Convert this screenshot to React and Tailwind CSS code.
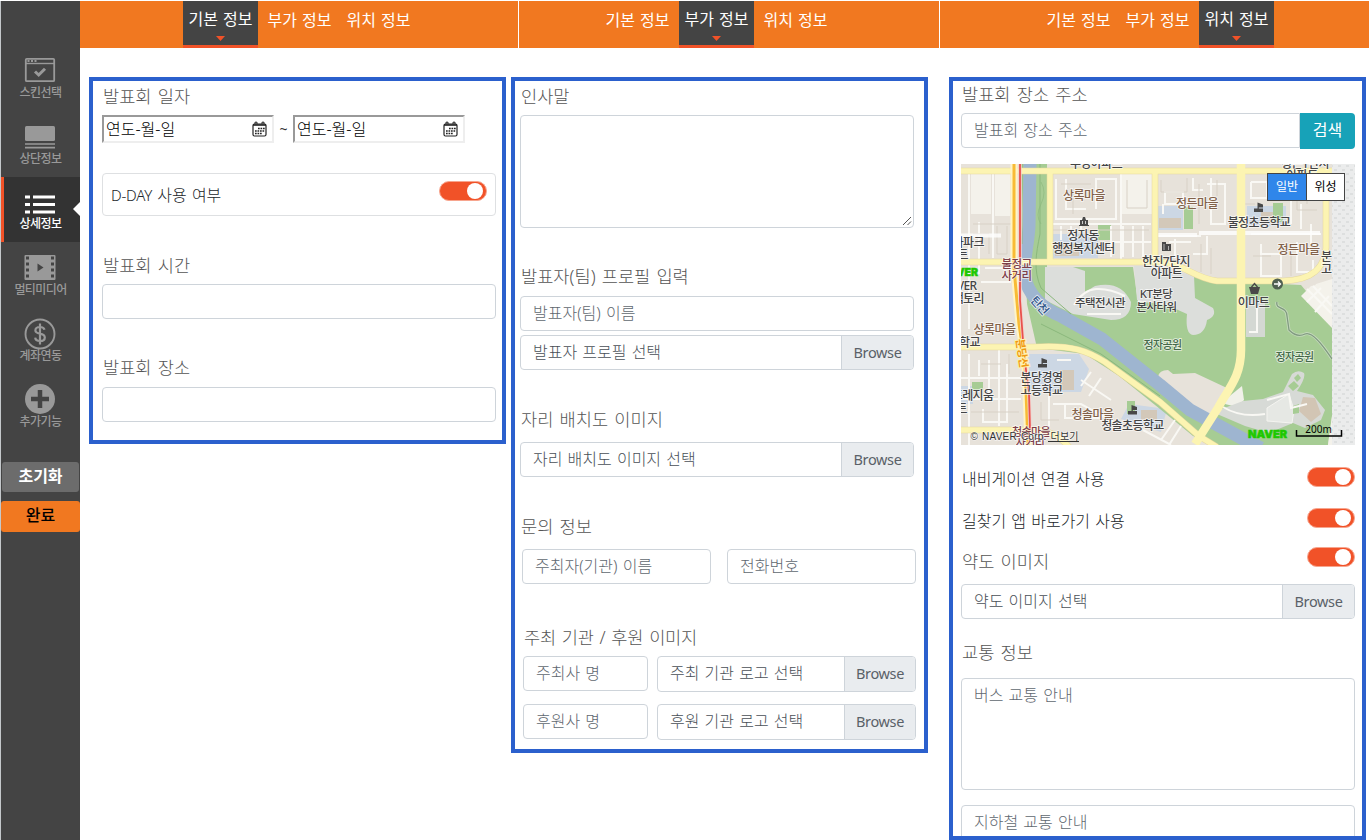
import React from "react";

const Label = ({ children, className = "" }) => (
  <div className={`h-6 shrink-0 pl-px text-[17.6px] font-light leading-[22px] whitespace-nowrap text-[#555] [word-spacing:1.6px] ${className}`}>
    {children}
  </div>
);

const Field = ({ children, className = "" }) => (
  <div
    className={`h-[35px] shrink-0 rounded border border-[#ced4da] bg-white px-3 text-base font-light leading-8 whitespace-nowrap text-[#5f6870] ${className}`}
  >
    {children}
  </div>
);

const FileField = ({ children, className = "h-[35px] w-[394px]", browse = "w-[72px]" }) => (
  <div className={`flex shrink-0 overflow-hidden rounded border border-[#ced4da] bg-white text-base whitespace-nowrap text-[#495057] ${className}`}>
    <div className="min-w-0 flex-1 px-3 font-light leading-8">{children}</div>
    <div className={`shrink-0 border-l border-[#ced4da] bg-[#e9ecef] text-center font-['Noto_Sans'] text-[14.5px] leading-[33px] tracking-[-0.35px] text-[#5a6168] ${browse}`}>
      Browse
    </div>
  </div>
);

const Toggle = ({ className = "" }) => (
  <div className={`flex h-5 w-12 shrink-0 items-center justify-end rounded-full border border-[#f7a58e] bg-[#f15228] pr-[3px] ${className}`}>
    <div className="size-4 rounded-full bg-white" />
  </div>
);

const TABS = ["기본 정보", "부가 정보", "위치 정보"];

const TabBar = ({ active, className }) => (
  <div className={`flex h-[47px] shrink-0 gap-1 bg-[#f17820] [word-spacing:0.8px] ${className}`}>
    {TABS.map((tab, i) =>
      i === active ? (
        <div key={tab} className="flex w-[75px] flex-col items-center border-b-[3px] border-[#f15228] bg-[#444] text-base leading-5 whitespace-nowrap text-white">
          <div className="mt-2 h-5">{tab}</div>
          <svg className="mt-[7px]" width="9" height="5" viewBox="0 0 9 5">
            <path d="M0 0H9L4.500 5Z" fill="#f15228" />
          </svg>
        </div>
      ) : (
        <div key={tab} className="w-[75px] pt-[9px] text-center text-base leading-5 whitespace-nowrap text-white">
          {tab}
        </div>
      )
    )}
  </div>
);

const DateField = () => (
  <div className="flex h-7 w-[172px] items-center justify-between border-2 border-t-[#999] border-r-[#eee] border-b-[#eee] border-l-[#999] pr-[5px] pl-[2px] text-base leading-6 font-light text-black">
    <span>연도-월-일</span>
    <svg width="15" height="16" viewBox="0 0 15 16" fill="none" stroke="#222">
      <rect x="1" y="3" width="13" height="12" rx="1.500" strokeWidth="1.200" />
      <path d="M1 4H14" strokeWidth="1.600" />
      <path d="M3 3V1.200H5V3M10 3V1.200H12V3" strokeWidth="1" />
      <path d="M6 7.500H13M3 10H13M3 12.500H10" strokeWidth="1.600" strokeDasharray="1.700 .8" />
    </svg>
  </div>
);

const MENU = [
  {
    name: "스킨선택",
    icon: (
      <>
        <rect x="1.800" y="3.800" width="28.400" height="22.400" rx="1" fill="none" stroke="currentColor" strokeWidth="1.800" />
        <path d="M2 8.500H30" stroke="currentColor" strokeWidth="1.400" />
        <path d="M3.500 6H5.500M7 6H9M10.500 6H12.500" stroke="currentColor" strokeWidth="1.800" />
        <path d="M11 16.500L14.700 20L21 13.800" fill="none" stroke="currentColor" strokeWidth="3" />
      </>
    ),
  },
  {
    name: "상단정보",
    icon: (
      <>
        <rect x="1" y="5" width="30" height="15" rx="1.500" fill="currentColor" />
        <path d="M1 23H31M1 26.700H31" stroke="currentColor" strokeWidth="1.700" />
      </>
    ),
  },
  {
    name: "상세정보",
    active: true,
    icon: <path d="M1 10H6M9 10H31M1 17.500H6M9 17.500H31M1 25H6M9 25H31" stroke="currentColor" strokeWidth="3" />,
  },
  {
    name: "멀티미디어",
    icon: (
      <>
        <rect x="0.500" y="3" width="31" height="25" rx="1" fill="currentColor" />
        <path d="M3.500 4.500V27M28.500 4.500V27" stroke="#444" strokeWidth="3" strokeDasharray="3 3" />
        <path d="M13.500 11.500L19.500 15.500L13.500 19.500Z" fill="#444" />
      </>
    ),
  },
  {
    name: "계좌연동",
    icon: (
      <>
        <circle cx="16" cy="16" r="14.500" fill="none" stroke="currentColor" strokeWidth="1.900" />
        <path d="M20.500 11.800C20 9.800 18.400 9 16 9C13.200 9 11.400 10.400 11.400 12.500C11.400 17 20.800 14.300 20.800 19.400C20.800 21.700 18.800 23 16 23C13.200 23 11.400 21.800 11.200 19.700M16 5.500V26.500" fill="none" stroke="currentColor" strokeWidth="2.200" />
      </>
    ),
  },
  {
    name: "추가기능",
    icon: (
      <>
        <circle cx="16" cy="15" r="15" fill="currentColor" />
        <path d="M16 6V24M7 15H25" stroke="#444" strokeWidth="4.500" />
      </>
    ),
  },
];

const Sidebar = () => (
  <aside className="mt-px flex w-20 shrink-0 flex-col border-l border-[#c4c8cb] bg-[#444] pt-[44px] text-[#999]">
    {MENU.map(({ name, icon, active }) => (
      <div
        key={name}
        className={`relative flex shrink-0 flex-col items-center pt-[10px] ${active ? "h-[65px] bg-[#333] text-white" : "h-[66px]"}`}
      >
        {active && <div className="absolute top-0 left-0 h-full w-[3px] bg-[#f15228]" />}
        <svg className="mr-[2px]" width="32" height="32" viewBox="0 0 32 32">{icon}</svg>
        <div className={`text-[12px] leading-3 font-medium tracking-[-0.6px] whitespace-nowrap ${active ? "-mt-[1px]" : ""}`}>{name}</div>
        {active && (
          <svg className="absolute top-[25px] right-0" width="7" height="14" viewBox="0 0 7 14">
            <path d="M7 0V14L0 7Z" fill="#fff" />
          </svg>
        )}
      </div>
    ))}
    <div className="mr-px ml-px mt-[22px] h-[30px] shrink-0 rounded-[3px] bg-[#6c6c6c] text-center text-base leading-[29px] font-bold text-white">초기화</div>
    <div className="mt-[9px] h-[31px] shrink-0 rounded-[3px] bg-[#f17820] text-center text-base leading-7 font-medium text-black">완료</div>
  </aside>
);

const ROAD = "#fcf4b2";
const GREEN = "#a6cc94";

const MapText = ({ x, y, children, fill = "#444", anchor = "middle", size = 12 }) => (
  <text
    x={x}
    y={y + size * 0.4}
    fill={fill}
    textAnchor={anchor}
    fontSize={size}
    fontWeight="500"
    letterSpacing="-0.6"
    stroke="#fff"
    strokeOpacity=".7"
    strokeWidth="1.600"
    paintOrder="stroke"
  >
    {children}
  </text>
);

const Flag = ({ x, y }) => (
  <path transform={`translate(${x} ${y})`} d="M0 9.500V6H3.500V0L9 2V5H4.800V6H9V9.500Z" fill="#484848" />
);

const BROWN = "#82624a";
const WINE = "#7d3f4a";

const MapView = () => (
  <div className="relative h-[281px] w-[394px] shrink-0 overflow-hidden">
    <svg width="394" height="281" viewBox="0 0 394 281">
      <defs>
        <pattern id="dots" width="8" height="8" patternUnits="userSpaceOnUse">
          <rect width="8" height="8" fill="#ebecec" />
          <path d="M1 2H4M5 6H8" stroke="#d9dbdb" strokeWidth="1.500" />
        </pattern>
        <clipPath id="land">
          <rect width="371" height="281" />
        </clipPath>
      </defs>
      <rect width="394" height="281" fill="url(#dots)" />
      <g clipPath="url(#land)">
        <rect width="371" height="281" fill="#e7e2da" />

        <g fill="#f4f2eb">
          <path d="M34 10H49V52H34ZM10 10H30V50H10ZM160 10H191V50H160ZM175 110H185V140H175ZM258 120H275V136H262ZM355 120L371 115V160L345 135Z" />
        </g>
        <g fill="#ccd7e4">
          <path d="M92 70H137V94H92ZM65 190L118 190L128 205L120 228H70ZM196 42H222V66H196ZM286 42H325V62H286ZM168 240L206 245L200 268L160 255ZM205 118L230 125L232 140L205 140ZM0 222H12V240H0Z" />
        </g>
        <path d="M94 80H118V92H94ZM99 206H113V226H99ZM198 54H220V64H198ZM300 48H316V60H300ZM180 246H196V256H180Z" fill="#d3c8b9" />

        <path
          d="M60 0H86V103H172L177 138L226 140L232 111L276 118L340 121L360 145L371 155V252L367 281H255L232 272L199 245L158 212L124 190L76 184L66 140Z"
          fill={GREEN}
        />
        <path d="M137 61H150V76H137ZM223 43H232V65H223ZM312 39H322V58H312ZM11 218H22V226H11ZM166 237H174V250H166Z" fill={GREEN} />
        <path d="M84 103H112L124 107V128L134 122Q160 116 170 138Q170 156 150 156L112 150L84 136Z" fill="#dcdedb" />
        <path d="M173 102L196 102L233 112L234 134L252 144Q256 152 246 156Q244 171 232 171Q224 170 226 150L208 142L176 136Z" fill="#dcdedb" />
        <path d="M285 136H304V173H285Z" fill="#d4d8d3" />
        <path d="M350 122L371 118V164L340 132Z" fill="#f4f2eb" />
        <path d="M197 213Q198 206 207 206L212 210L234 209L266 224L266 238L247 256L218 234L216 229L207 226Z" fill="#e7e2da" />
        <path d="M265 235L281 222L283 236L276 243L264 240Z" fill="#f1f1e9" />
        <path
          d="M258 246L282 237L302 235L322 228L331 210Q337 205 343 209Q345 214 336 227L352 231L364 246L360 256L344 264L332 259L308 269L284 262L256 250Z"
          fill="#d7dad6"
        />
        <path d="M306 244L328 230L333 246L331 259L306 257Z" fill="#e6e8e4" stroke="#f4f4f0" />
        <path d="M342 233L354 234L360 250L350 258L338 247Z" fill="#d2c5b4" />
        <path d="M327 222L333 217L338 222L332 227ZM333 214L337 210L340 214L336 218ZM332 242L338 240V249L332 250Z" fill={GREEN} />
        <path d="M371 252V281H367Z" fill="#f4f2eb" />

        <path
          d="M69 0L68 62C67 82 62 96 64 112C66 130 82 145 100 152L141 175L199 221L229 246L284 276L300 284"
          fill="none"
          stroke="#9eb5d0"
          strokeLinejoin="round"
          strokeWidth="13"
        />
        <g fill="none" stroke="#8bb87c" strokeWidth="1">
          <path d="M61 0V80M79 0V70C75 90 72 106 80 124L110 150M80 160L140 190L199 232" />
          <path d="M80 18Q86 28 80 40T80 60" opacity=".6" />
        </g>
        <path d="M316 138C314 146 326 142 326 152L328 166Q336 174 344 170T371 195" fill="none" stroke="#c6d9bd" strokeWidth="3" />
        <path d="M316 138C314 146 326 142 326 152L328 166Q336 174 344 170T371 195" fill="none" stroke="#7f9b7f" strokeWidth="1.300" />

        <g fill="none" stroke="#f9f8f4" strokeWidth="2">
          <path d="M8 10V165M8 190V281M32 10V94M0 214H60M0 235H60M38 186V262M92 60H190M100 62V76M110 62V76M120 62V70M150 62V93M162 62V93M172 62V93M182 62V93M150 78H190M95 15V55H155V15H135V45M105 15V45H125M160 10V96" />
          <path d="M196 72H240M290 70H360M204 28V40H222V28ZM202 50V40M250 14V60H264V20H246M242 26H232V14M290 18H306V34H290V18M330 18V60M340 40V65M350 60V80M246 72V90H232M300 80V112H320V90H300M336 78V108H352V96M214 75V94M208 78H230" />
          <path d="M18 196V212M28 196V232M46 200V258H22V245M18 58V110M24 104H50M20 118H50M96 196H110M88 232V262M92 240H120L160 262M120 216L150 236M130 208L120 222M140 214L128 232M104 240V254H140M182 266L210 281M214 256L200 276M220 262L208 281" />
          <path d="M346 125L371 150M352 122L371 142M346 138L360 124M354 148L368 132M113 141Q122 126 135 125T164 132M126 150H160M262 243Q280 254 304 250M296 142V168H288M306 236L328 230L330 244L346 240" />
        </g>
        <g fill="none" stroke="#d8d1c6" strokeWidth="1">
          <path d="M12 60H52M12 70H28V90M36 62V90H46V62M100 20H130M112 26V50M92 66H188M166 16V44H186V16M200 16V28H226V14M238 20V60M256 16V32M294 40H280M310 16V34H326M336 16V46H356M346 20V40M240 80V108M250 84V110M292 92H310M330 88V112M20 200H40M48 190V210M10 248H58M80 238V256H98" />
        </g>
        <path d="M0 71.500H40M196 71H236M238 69H359" stroke="#fff" strokeWidth="4" opacity=".8" />

        <path
          d="M0 7H371M89 5V98M194 5V96M280 0V186C280 214 266 226 257 244L236 276M0 98H200C222 99 232 114 256 117H322C352 116 363 104 365 84V20M0 183H72C112 180 128 188 144 198L199 238L238 272L256 283M0 266H76Q96 268 108 283"
          fill="none"
          stroke="#e5d89d"
          strokeWidth="6.500"
        />
        <g fill="none" stroke={ROAD}>
          <path
            d="M0 7H371M89 5V98M194 5V96M0 98H200C222 99 232 114 256 117H322C352 116 363 104 365 84V20M0 183H72C112 180 128 188 144 198L199 238L238 272L256 283M0 266H76Q96 268 108 283"
            strokeWidth="5.500"
          />
          <path d="M280 0V186C280 214 266 226 257 244L234 280" strokeWidth="8.500" />
        </g>
        <g fill="none">
          <path d="M53 0V104L58 160L64 200L67 281" stroke="#fff4c5" strokeWidth="7" />
          <path d="M53 0V104L58 160L64 200L67 281" stroke="#f8bb35" strokeWidth="3" />
          <path d="M59 0V136L63 190L68 230L69 266" stroke="#f3d0cc" strokeWidth="3.500" />
          <path d="M59 0V136L63 190L68 230L69 266" stroke="#e9504c" strokeWidth="1.800" />
        </g>

        <path d="M118 62V61H119V56H121L122 53H124L125 56H127V61H128V62Z" fill="#484848" />
        <path d="M121.500 57V60M124.500 57V60" stroke="#ccc" />
        <Flag x="293" y="38.500" />
        <Flag x="77" y="194" />
        <Flag x="167" y="241" />
        <path d="M201 87V78H205V80H210V87Z" fill="#484848" />
        <path d="M203 80V86M207.500 82V86" stroke="#ccc" strokeWidth=".8" />
        <path d="M288 123H299L297 130H290Z" fill="#484848" />
        <path d="M290.500 123L293.500 119.500L296.500 123" stroke="#484848" strokeWidth="1.400" fill="none" />
        <circle cx="316.500" cy="120" r="5.500" fill="#506052" />
        <path d="M313 120H319M317 117.500L319.500 120L317 122.500" stroke="#fff" strokeWidth="1.300" fill="none" />

        <MapText x={135} y={-0.5}>우성아파트</MapText>
        <MapText x={123} y={31.5} fill={BROWN}>상록마을</MapText>
        <MapText x={122} y={71.5}>정자동</MapText>
        <MapText x={122.500} y={84.5}>행정복지센터</MapText>
        <MapText x={23} y={78} anchor="end">아파크</MapText>
        <MapText x={7} y={90.5} anchor="end">트</MapText>
        <MapText x={55.500} y={99.5} fill={WINE} size={11.5}>불정교</MapText>
        <MapText x={55.500} y={111} fill={WINE} size={11.5}>사거리</MapText>
        <MapText x={15.500} y={121} anchor="end">NAVER</MapText>
        <MapText x={23} y={134} anchor="end">팩토리</MapText>
        <MapText x={33.500} y={165} fill={BROWN}>상록마을</MapText>
        <MapText x={19} y={178} anchor="end">고등학교</MapText>
        <MapText x={80.500} y={213.500}>분당경영</MapText>
        <MapText x={80.500} y={226}>고등학교</MapText>
        <MapText x={32.500} y={231} anchor="end">프레지움</MapText>
        <MapText x={6} y={244} anchor="end">트</MapText>
        <MapText x={131.500} y={250} fill={BROWN}>청솔마을</MapText>
        <MapText x={171.500} y={261}>청솔초등학교</MapText>
        <MapText x={70} y={268} fill={WINE} size={11}>청솔마을</MapText>
        <MapText x={69} y={279} fill={WINE} size={11}>사거리</MapText>
        <MapText x={139} y={138} size={11.5}>주택전시관</MapText>
        <MapText x={195} y={129} size={11.5}>KT분당</MapText>
        <MapText x={195.500} y={142} size={11.5}>본사타워</MapText>
        <MapText x={205} y={97}>한진7단지</MapText>
        <MapText x={205.500} y={109}>아파트</MapText>
        <MapText x={236} y={39.500} fill={BROWN}>정든마을</MapText>
        <MapText x={298} y={58.500}>불정초등학교</MapText>
        <MapText x={337.500} y={85} fill={BROWN}>정든마을</MapText>
        <MapText x={360} y={92} anchor="start">분당</MapText>
        <MapText x={360} y={105} anchor="start">고등</MapText>
        <MapText x={292.500} y={138}>이마트</MapText>
        <MapText x={201.500} y={181} fill="#44694a" size={11}>정자공원</MapText>
        <MapText x={333.500} y={192.500} fill="#44694a" size={11}>정자공원</MapText>
        <MapText x={344} y={-1}>정든1단지</MapText>
        <MapText x={341} y={11}>아파트</MapText>
        <g transform="translate(79 141) rotate(48)">
          <MapText x={0} y={0} fill="#2f5488" size={11.5}>탄천</MapText>
        </g>
        <text transform="translate(61 189) rotate(82)" y="4" textAnchor="middle" fontSize="11" fontWeight="700" letterSpacing="-0.6" fill="#f09a12" stroke="#fff2b0" strokeWidth="2" paintOrder="stroke">
          분당선
        </text>
        <text x="17" y="111.500" textAnchor="end" fontFamily="Inter, sans-serif" fontWeight="900" fontSize="10.500" fill="#1ec800" stroke="#1ec800" strokeWidth=".5">NAVER</text>
      </g>
      <text x="9.500" y="275.500" fontFamily="Liberation Sans, Noto Sans CJK KR, sans-serif" fontSize="10" fill="#333" stroke="#fff" strokeOpacity=".6" strokeWidth="1.500" paintOrder="stroke" textLength="108">© NAVER Corp. 더보기</text>
      <path d="M87 277.500H118" stroke="#333" />
      <text x="287" y="273.500" fontFamily="Inter, sans-serif" fontWeight="900" fontSize="10.500" textLength="39" lengthAdjust="spacingAndGlyphs" fill="#1ec800" stroke="#1ec800" strokeWidth=".5">NAVER</text>
      <text x="357.500" y="269" textAnchor="middle" fontFamily="Noto Sans, sans-serif" fontSize="10" fill="#000">200m</text>
      <path d="M335.500 266V272H380.500V266" fill="none" stroke="#000" strokeWidth="1.500" />
    </svg>
    <div className="absolute top-[9px] left-[306px] flex h-7 w-[78px] border border-[#444] bg-white text-center text-xs leading-[25px]">
      <div className="w-[39px] border-r border-[#444] bg-[#2f86ea] text-white">일반</div>
      <div className="flex-1 text-black">위성</div>
    </div>
  </div>
);

const PANEL = "w-[417px] border-4 border-[#2b60cd] flex flex-col";

export default function App() {
  return (
    <div className="flex h-[840px] w-[1369px] overflow-hidden bg-white font-['Noto_Sans','Noto_Sans_CJK_KR',sans-serif] [word-spacing:1px]">
      <Sidebar />

      <section className="w-[439px] shrink-0 pt-px">
        <TabBar active={0} className="mr-px pl-[103px]" />
        <div className={`mt-[29px] ml-[9px] h-[367px] pl-[9px] ${PANEL}`}>
          <Label className="mt-1">발표회 일자</Label>
          <div className="mt-[6px] flex shrink-0 items-center">
            <DateField />
            <span className="w-[19px] text-center text-sm text-[#333]">~</span>
            <DateField />
          </div>
          <div className="mt-[30px] flex h-[43px] w-[394px] shrink-0 justify-between rounded border border-[#dee0e2] pr-2 pl-[7px]">
            <div className="pl-px text-base leading-[42px] font-light text-[#212529]">
              <span className="text-[15px] tracking-[-0.2px]">D-DAY</span> 사용 여부
            </div>
            <Toggle className="mt-[7px]" />
          </div>
          <Label className="mt-[38px]">발표회 시간</Label>
          <Field className="mt-[6px] w-[394px]" />
          <Label className="mt-[37px]">발표회 장소</Label>
          <Field className="mt-[7px] w-[394px]" />
        </div>
      </section>

      <section className="w-[421px] shrink-0 pt-px">
        <TabBar active={1} className="mr-px pl-[81px]" />
        <div className={`mt-[29px] -ml-[8px] h-[676px] pl-[5px] ${PANEL}`}>
          <Label className="mt-1">인사말</Label>
          <div className="mt-[6px] flex h-[113px] w-[394px] shrink-0 items-end justify-end rounded border border-[#ced4da] p-px">
            <svg width="10" height="10" viewBox="0 0 10 10">
              <path d="M1 9L9 1M5.500 9L9 5.500" stroke="#555" />
            </svg>
          </div>
          <Label className="mt-[37px]">발표자(팀) 프로필 입력</Label>
          <Field className="mt-[7px] w-[394px]">발표자(팀) 이름</Field>
          <FileField className="mt-1 h-[35px] w-[394px]">발표자 프로필 선택</FileField>
          <Label className="mt-[38px]">자리 배치도 이미지</Label>
          <FileField className="mt-[10px] h-[35px] w-[394px]">자리 배치도 이미지 선택</FileField>
          <Label className="mt-[38px]">문의 정보</Label>
          <div className="mt-[10px] ml-[2px] flex shrink-0 gap-4">
            <Field className="w-[189px]">주최자(기관) 이름</Field>
            <Field className="w-[189px]">전화번호</Field>
          </div>
          <Label className="mt-[42px] ml-[3px] tracking-[-0.25px]">주최 기관 / 후원 이미지</Label>
          <div className="mt-[6px] ml-[3px] flex h-9 shrink-0 gap-[9px]">
            <Field className="w-[125px]">주최사 명</Field>
            <FileField className="h-9 w-[259px]" browse="w-[71px]">주최 기관 로고 선택</FileField>
          </div>
          <div className="mt-3 ml-[3px] flex h-9 shrink-0 gap-[9px]">
            <Field className="w-[125px]">후원사 명</Field>
            <FileField className="h-9 w-[259px]" browse="w-[71px]">후원 기관 로고 선택</FileField>
          </div>
        </div>
      </section>

      <section className="w-[429px] shrink-0 pt-px">
        <TabBar active={2} className="pl-[101px]" />
        <div className={`mt-[29px] ml-[9px] h-[763px] overflow-hidden pl-2 ${PANEL}`}>
          <Label className="mt-[2px]">발표회 장소 주소</Label>
          <div className="mt-[6px] flex h-9 w-[394px] shrink-0">
            <Field className="h-9 flex-1 rounded-r-none">발표회 장소 주소</Field>
            <div className="w-[55px] rounded-r bg-[#17a2b8] text-center text-base leading-[34px] text-white">검색</div>
          </div>
          <div className="mt-[15px] flex shrink-0">
            <MapView />
          </div>
          <div className="mt-[22px] flex h-10 w-[394px] shrink-0 justify-between pl-px text-base leading-[25px] font-light text-[#212529]">
            <div>내비게이션 연결 사용</div>
            <Toggle />
          </div>
          <div className="mt-[1px] flex h-[39px] w-[394px] shrink-0 justify-between pl-px text-base leading-[27px] font-light text-[#212529]">
            <div>길찾기 앱 바로가기 사용</div>
            <Toggle />
          </div>
          <div className="flex h-[37px] w-[394px] shrink-0 justify-between">
            <Label className="mt-[3px]">약도 이미지</Label>
            <Toggle />
          </div>
          <FileField>약도 이미지 선택</FileField>
          <Label className="mt-[22px]">교통 정보</Label>
          <Field className="mt-[13px] h-[112px] w-[394px]">버스 교통 안내</Field>
          <Field className="mt-[15px] h-[112px] w-[394px]">지하철 교통 안내</Field>
        </div>
      </section>
    </div>
  );
}
